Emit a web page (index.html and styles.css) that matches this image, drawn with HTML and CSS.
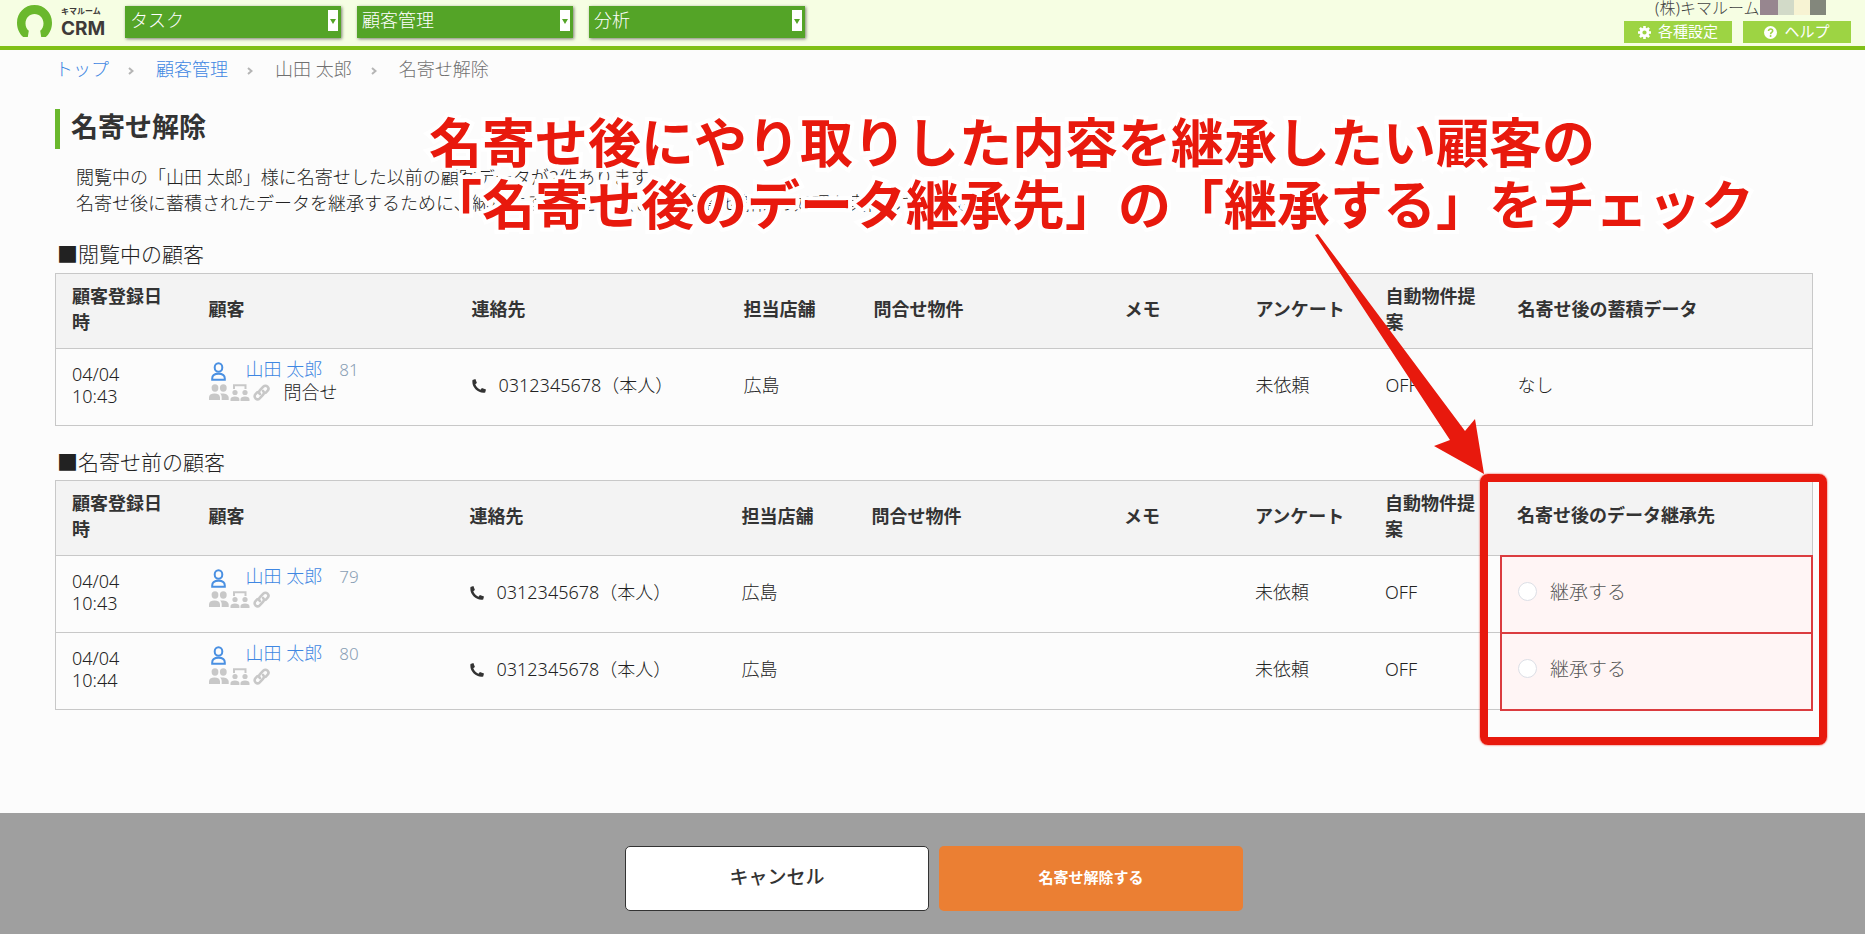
FILE: index.html
```html
<!DOCTYPE html>
<html lang="ja">
<head>
<meta charset="utf-8">
<title>名寄せ解除 | キマルームCRM</title>
<meta name="viewport" content="width=device-width, initial-scale=1">
<link rel="stylesheet" href="styles.css">
</head>
<body>
<svg class="sprite" aria-hidden="true">
  <symbol id="i-person" viewBox="0 0 15 19"><g fill="none" stroke="currentColor" stroke-width="2"><ellipse cx="7.500" cy="5.500" rx="3.800" ry="4.300"/><path d="M1.200 17.800v-1.300c0-3 2.500-4.700 6.300-4.700s6.300 1.700 6.300 4.700v1.300z"/></g></symbol>
  <symbol id="i-users" viewBox="0 0 20 17"><g fill="currentColor"><ellipse cx="6" cy="4" rx="3.400" ry="3.700"/><ellipse cx="14.300" cy="4" rx="3.400" ry="3.700"/><path d="M0 16v-2.500C0 11 2 9.500 5.500 9.500S11 11 11 13.500V16zM11 9.500c5-.6 8.700 1 8.700 4V16h-7v-2.500c0-1.700-.5-3-1.700-4z"/></g></symbol>
  <symbol id="i-net" viewBox="0 0 20 17"><path d="M4 5V1.200h11.500V5" fill="none" stroke="currentColor" stroke-width="2"/><g fill="currentColor"><circle cx="5" cy="8.500" r="2.600"/><circle cx="15" cy="8.500" r="2.600"/><path d="M.5 17v-1.800c0-1.800 1.800-2.700 4.400-2.700s4.500.9 4.500 2.700V17zM10.500 17v-1.800c0-1.800 1.800-2.700 4.500-2.700s4.500.9 4.500 2.700V17z"/></g></symbol>
  <symbol id="i-link" viewBox="0 0 17 17"><g fill="none" stroke="currentColor" stroke-width="2.600" stroke-linecap="round"><path d="M7 10.200c-1.200-1.200-1.200-2.800 0-4L10.300 2.700c1.200-1.200 3-1.200 4.200 0s1.200 3 0 4.200L12.600 8.800"/><path d="M10 6.800c1.200 1.200 1.200 2.800 0 4L6.700 14.300c-1.200 1.200-3 1.200-4.200 0s-1.200-3 0-4.200L4.400 8.200"/></g></symbol>
  <symbol id="i-phone" viewBox="0 0 14 14"><path fill="currentColor" d="M.5 1 3.400 0 4.900 4 3.300 5.300C4.200 7.800 6 9.700 8.500 10.700L9.900 9.100 14 10.500 13.200 13.500C6.500 14.800-.8 8.500.5 1z"/></symbol>
  <symbol id="i-gear" viewBox="0 0 16 16"><circle cx="8" cy="8" r="4.300" fill="none" stroke="currentColor" stroke-width="3.400"/><g stroke="currentColor" stroke-width="3.200"><path d="M8 0v3M8 13v3M0 8h3M13 8h3M2.400 2.400l2 2M11.600 11.600l2 2M13.600 2.400l-2 2M2.400 13.600l2-2"/></g></symbol>
  <symbol id="i-help" viewBox="0 0 16 16"><circle cx="8" cy="8" r="8" fill="currentColor"/><path d="M5.500 6.200c0-3.300 5.200-3.200 5.200 0C10.700 8 8.100 8 8.100 10" fill="none" stroke="#9dd443" stroke-width="1.900"/><circle cx="8.100" cy="12.200" r="1.200" fill="#9dd443"/></symbol>
</svg>

<header class="topbar">
  <a class="logo" href="#" aria-label="キマルームCRM">
    <svg class="logo-mark" viewBox="0 0 35 32" aria-hidden="true"><path fill="#6ab82d" d="M6.200 32C2.300 28.500 0 23.500 0 17.700 0 7.800 7.600 0 17.500 0S35 7.800 35 17.700c0 5.800-2.300 10.800-6.200 14.300h-4.600l-1-6.200c2-1.600 3.300-4.300 3.300-7.400 0-5.300-4-9.400-9-9.400s-9 4.100-9 9.400c0 3.100 1.300 5.800 3.300 7.400L10.800 32z"/></svg>
    <span class="logo-text"><small>キマルーム</small><strong>CRM</strong></span>
  </a>
  <nav class="menus" aria-label="メインメニュー">
    <select class="menu" aria-label="タスク"><option>タスク</option></select>
    <select class="menu" aria-label="顧客管理"><option>顧客管理</option></select>
    <select class="menu" aria-label="分析"><option>分析</option></select>
  </nav>
  <div class="account">
    <div class="company">(株)キマルーム<span class="swatches"><i class="sw sw-a"></i><i class="sw sw-b"></i><i class="sw sw-c"></i><i class="sw sw-d"></i></span></div>
    <div class="tools">
      <button class="tool" type="button"><svg><use href="#i-gear"/></svg>各種設定</button>
      <button class="tool" type="button"><svg><use href="#i-help"/></svg>ヘルプ</button>
    </div>
  </div>
</header>

<main class="content">
  <nav class="crumbs" aria-label="パンくず">
    <a href="#">トップ</a><svg viewBox="0 0 6 8"><path d="M1 1l3.500 3L1 7"/></svg>
    <a href="#">顧客管理</a><svg viewBox="0 0 6 8"><path d="M1 1l3.500 3L1 7"/></svg>
    <span>山田 太郎</span><svg viewBox="0 0 6 8"><path d="M1 1l3.500 3L1 7"/></svg>
    <span>名寄せ解除</span>
  </nav>
  <h1 class="title">名寄せ解除</h1>
  <p class="lead">閲覧中の「山田 太郎」様に名寄せした以前の顧客データが2件あります。<br>名寄せ後に蓄積されたデータを継承するために、継承する顧客を選択して、名寄せ解除の処理を実行してください。</p>

  <h2 class="section">■閲覧中の顧客</h2>
  <table class="grid">
    <colgroup><col class="c-date"><col class="c-name"><col class="c-tel"><col class="c-shop"><col><col class="c-memo"><col class="c-form"><col class="c-auto"><col class="c-last"></colgroup>
    <thead><tr><th>顧客登録日時</th><th>顧客</th><th>連絡先</th><th>担当店舗</th><th>問合せ物件</th><th>メモ</th><th>アンケート</th><th>自動物件提案</th><th>名寄せ後の蓄積データ</th></tr></thead>
    <tbody>
      <tr>
        <td class="date">04/04<br>10:43</td>
        <td class="who"><div class="who-top"><svg class="person"><use href="#i-person"/></svg><a href="#">山田 太郎</a><span class="num">81</span></div><div class="who-sub"><svg><use href="#i-users"/></svg><svg><use href="#i-net"/></svg><svg class="link"><use href="#i-link"/></svg><span>問合せ</span></div></td>
        <td><span class="tel"><svg><use href="#i-phone"/></svg>0312345678（本人）</span></td>
        <td>広島</td><td></td><td></td><td>未依頼</td><td>OFF</td><td>なし</td>
      </tr>
    </tbody>
  </table>

  <h2 class="section">■名寄せ前の顧客</h2>
  <table class="grid">
    <colgroup><col class="c-date"><col class="c-name-b"><col class="c-tel"><col class="c-shop"><col><col class="c-memo"><col class="c-form"><col class="c-auto"><col class="c-last"></colgroup>
    <thead><tr><th>顧客登録日時</th><th>顧客</th><th>連絡先</th><th>担当店舗</th><th>問合せ物件</th><th>メモ</th><th>アンケート</th><th>自動物件提案</th><th>名寄せ後のデータ継承先</th></tr></thead>
    <tbody>
      <tr>
        <td class="date">04/04<br>10:43</td>
        <td class="who"><div class="who-top"><svg class="person"><use href="#i-person"/></svg><a href="#">山田 太郎</a><span class="num">79</span></div><div class="who-sub"><svg><use href="#i-users"/></svg><svg><use href="#i-net"/></svg><svg class="link"><use href="#i-link"/></svg></div></td>
        <td><span class="tel"><svg><use href="#i-phone"/></svg>0312345678（本人）</span></td>
        <td>広島</td><td></td><td></td><td>未依頼</td><td>OFF</td>
        <td class="pick"><label><input type="radio" name="heir">継承する</label></td>
      </tr>
      <tr>
        <td class="date">04/04<br>10:44</td>
        <td class="who"><div class="who-top"><svg class="person"><use href="#i-person"/></svg><a href="#">山田 太郎</a><span class="num">80</span></div><div class="who-sub"><svg><use href="#i-users"/></svg><svg><use href="#i-net"/></svg><svg class="link"><use href="#i-link"/></svg></div></td>
        <td><span class="tel"><svg><use href="#i-phone"/></svg>0312345678（本人）</span></td>
        <td>広島</td><td></td><td></td><td>未依頼</td><td>OFF</td>
        <td class="pick"><label><input type="radio" name="heir">継承する</label></td>
      </tr>
    </tbody>
  </table>
</main>

<footer class="actions">
  <button class="btn btn-cancel" type="button">キャンセル</button>
  <button class="btn btn-go" type="button">名寄せ解除する</button>
</footer>

<p class="note">名寄せ後にやり取りした内容を継承したい顧客の<br>「名寄せ後のデータ継承先」の「継承する」をチェック</p>
<svg class="arrow" viewBox="0 0 170 241" aria-hidden="true"><path fill="#e8190d" d="M0 1 3 0 150 197 160 185 169 240 119 212 135 206Z"/></svg>
<div class="frame"></div>
</body>
</html>
```
FILE: styles.css
```css
* { box-sizing: border-box; }
body {
  position: relative;
  display: flex;
  flex-direction: column;
  min-height: 100vh;
  margin: 0;
  background: #fcfcfc;
  color: #222;
  font: 300 18px/26px "Noto Sans", "Noto Sans CJK JP", sans-serif;
}
a { color: #3f87e2; text-decoration: none; }
button, select { font: inherit; cursor: pointer; }
.sprite { position: absolute; width: 0; height: 0; }

/* header */
.topbar {
  display: flex;
  height: 50px;
  padding-left: 17px;
  padding-right: 14px;
  background: #f6fee3;
  border-bottom: 4px solid #80c016;
}
.logo { display: flex; gap: 9px; width: 108px; padding-top: 5px; color: #3e3a39; }
.logo-mark { width: 35px; height: 32px; }
.logo-text { display: flex; flex-direction: column; font-family: Inter, "Noto Sans CJK JP", sans-serif; }
.logo-text small { font-size: 8px; line-height: 12px; font-weight: 700; }
.logo-text strong { font-size: 19px; line-height: 24px; font-weight: 700; }
.menus { display: flex; gap: 16px; padding-top: 6px; }
.menu {
  appearance: none;
  width: 216px;
  height: 32px;
  padding: 0 24px 4px 5px;
  border: 0;
  border-radius: 0;
  color: #fff;
  background:
    url("data:image/svg+xml,%3Csvg xmlns='http://www.w3.org/2000/svg' width='10' height='21'%3E%3Crect width='10' height='21' fill='white'/%3E%3Cpath d='M2 9h6l-3 5z' fill='%2354a427'/%3E%3C/svg%3E") no-repeat right 3px top 4px,
    #54a427;
  box-shadow: 1px 1px 3px rgba(0, 0, 0, .5);
}
.account { margin-left: auto; }
.company { display: flex; gap: 1px; padding-left: 31px; font-size: 16px; line-height: 16px; height: 21px; color: #444; }
.swatches { display: flex; height: 15px; }
.sw { width: 16px; }
.sw-a { width: 18px; background: #97868f; }
.sw-b { background: #d2dac8; }
.sw-c { background: #f7f3d3; }
.sw-d { background: #83877c; }
.tools { display: flex; gap: 11px; }
.tool {
  display: flex;
  align-items: center;
  justify-content: center;
  gap: 7px;
  width: 108px;
  height: 22px;
  padding: 0 0 2px;
  border: 0;
  color: #fff;
  background: #9dd443;
  font-size: 15px;
  line-height: 20px;
  font-weight: 400;
}
.tool svg { width: 13px; height: 13px; margin-top: 2px; }

/* page */
.content { flex: 1; padding: 6px 52px 0 55px; }
.crumbs { display: flex; align-items: center; color: #707070; line-height: 26px; }
.crumbs svg { width: 6px; height: 8px; margin: 3px 22px 0 19px; fill: none; stroke: #b5b5b5; stroke-width: 2; }
.title {
  margin: 27px 0 0;
  padding: 0 0 4px 11px;
  border-left: 5px solid #6ab82d;
  color: #333;
  font-size: 27px;
  line-height: 36px;
  font-weight: 700;
}
.lead { margin: 15px 0 0 21px; }
.section { margin: 22px 0 0 2px; padding-bottom: 3px; font-size: 21px; line-height: 32px; font-weight: 300; }

.grid { width: 100%; border: 1px solid #c8c8c8; border-collapse: collapse; table-layout: fixed; }
.grid + .section { margin-top: 20px; padding-bottom: 2px; }
.c-date { width: 137px; }
.c-name { width: 263px; }
.c-name-b { width: 261px; }
.c-tel { width: 272px; }
.c-shop { width: 130px; }
.c-memo { width: 131px; }
.c-form { width: 130px; }
.c-auto { width: 132px; }
.c-last { width: 311px; }
.grid th { height: 75px; padding: 0 16px 5px; background: #f3f3f3; color: #333; text-align: left; font-weight: 700; }
.grid td { height: 77px; padding: 0 16px 5px; border-top: 1px solid #c8c8c8; }
.grid .date { line-height: 22px; }
.grid .who { padding-top: 9px; line-height: 23px; vertical-align: top; }
.who-top, .who-sub { display: flex; align-items: center; height: 23px; white-space: nowrap; }
.who-top a { margin-left: 20px; }
.person { width: 15px; height: 19px; margin-left: 2px; margin-top: 3px; color: #4a90e2; }
.num { margin-left: 17px; font-size: 17px; color: #8a9fb5; }
.who-sub svg { width: 20px; height: 17px; margin-right: 1px; color: #c8c8c8; }
.who-sub .link { width: 17px; margin: 0 14px 0 2px; }
.tel { display: flex; align-items: center; gap: 13px; white-space: nowrap; }
.tel svg { width: 14px; height: 14px; margin-top: 2px; color: #333; }
.grid .pick { border: 2px solid #db3c3f; background: #fff5f5; }
.pick label { display: flex; align-items: center; gap: 13px; font-size: 19px; color: #555; }
.pick input { appearance: none; width: 19px; height: 19px; margin: 0; border: 1px solid #dcdfe6; border-radius: 50%; background: #fff; }

/* footer */
.actions { display: flex; justify-content: center; gap: 10px; height: 121px; padding-top: 33px; padding-left: 3px; background: #9f9f9f; }
.btn { width: 304px; height: 65px; padding: 0 0 4px; border-radius: 5px; }
.btn-cancel { border: 1px solid #333; background: #fff; color: #333; font-size: 19px; font-weight: 500; }
.btn-go { border: 0; background: #eb7f33; color: #fff; font-size: 15px; font-weight: 700; }

/* callout drawn over the page */
.note {
  position: absolute;
  top: 112px;
  left: 429px;
  margin: 0;
  color: #e8190d;
  font-size: 53px;
  line-height: 62px;
  font-weight: 700;
  white-space: nowrap;
  -webkit-text-stroke: 8px #fff;
  paint-order: stroke fill;
}
.arrow { position: absolute; top: 234px; left: 1315px; width: 170px; height: 241px; }
.frame { position: absolute; top: 474px; left: 1480px; width: 347px; height: 271px; border: 8px solid #e8190d; border-radius: 8px; box-shadow: 0 0 2px #e8190d; }
```
